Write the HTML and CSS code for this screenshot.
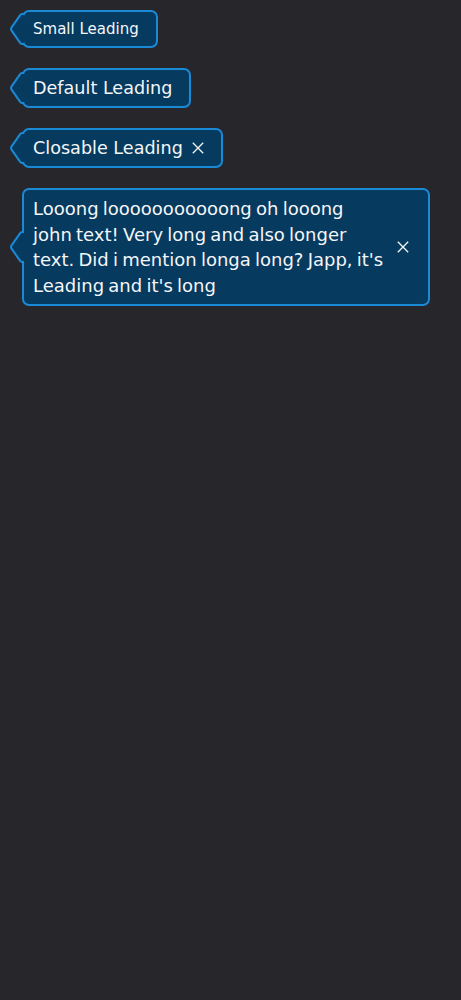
FILE: index.html
```html
<!DOCTYPE html>
<html>
<head>
<meta charset="utf-8">
<link rel="stylesheet" href="styles.css">
</head>
<body>
<div class="stack">
  <div class="tip tip-small">
    <svg class="arrow" viewBox="0 0 14 32" width="14" height="32"><path d="M14 1 L12 1 C11 1 10.5 1.6 9.8 2.6 L1.4 14.6 Q0.6 16 1.4 17.4 L9.8 29.4 C10.5 30.4 11 31 12 31 L14 31" /></svg>
    <span class="text">Small Leading</span>
  </div>
  <div class="tip">
    <svg class="arrow" viewBox="0 0 14 32" width="14" height="32"><path d="M14 1 L12 1 C11 1 10.5 1.6 9.8 2.6 L1.4 14.6 Q0.6 16 1.4 17.4 L9.8 29.4 C10.5 30.4 11 31 12 31 L14 31" /></svg>
    <span class="text">Default Leading</span>
  </div>
  <div class="tip">
    <svg class="arrow" viewBox="0 0 14 32" width="14" height="32"><path d="M14 1 L12 1 C11 1 10.5 1.6 9.8 2.6 L1.4 14.6 Q0.6 16 1.4 17.4 L9.8 29.4 C10.5 30.4 11 31 12 31 L14 31" /></svg>
    <span class="text">Closable Leading</span>
    <button class="close" aria-label="close"><svg viewBox="0 0 12 12" width="12" height="12"><path d="M0.8 0.8 L11.2 11.2 M11.2 0.8 L0.8 11.2"/></svg></button>
  </div>
  <div class="tip tip-long">
    <svg class="arrow" viewBox="0 0 14 32" width="14" height="32"><path d="M14 1 L12 1 C11 1 10.5 1.6 9.8 2.6 L1.4 14.6 Q0.6 16 1.4 17.4 L9.8 29.4 C10.5 30.4 11 31 12 31 L14 31" /></svg>
    <span class="text">Looong looooooooooong oh looong john text! Very long and also longer text. Did i mention longa long? Japp, it's Leading and it's long</span>
    <button class="close" aria-label="close"><svg viewBox="0 0 12 12" width="12" height="12"><path d="M0.8 0.8 L11.2 11.2 M11.2 0.8 L0.8 11.2"/></svg></button>
  </div>
</div>
</body>
</html>
```
FILE: styles.css
```css
html, body {
  margin: 0;
  padding: 0;
  background: #27262b;
  height: 100%;
}
body {
  font-family: "DejaVu Sans", sans-serif;
  color: #f4f6f8;
}
.stack {
  display: flex;
  flex-direction: column;
  align-items: flex-start;
  gap: 20px;
  padding: 10px 0 0 22px;
}
.tip {
  position: relative;
  display: flex;
  align-items: center;
  gap: 9px;
  box-sizing: border-box;
  background: #063a5f;
  border: 2px solid #1a8ad6;
  border-radius: 7px;
  padding: 5px 17px 5px 9px;
  font-size: 17.6px;
  line-height: 26px;
}
.tip-small {
  font-size: 15px;
  line-height: 22px;
  padding: 6px 17px 6px 9px;
}
.tip-long {
  width: 408px;
  gap: 12px;
  font-size: 18px;
  line-height: 25.5px;
  word-spacing: -1.5px;
  padding: 6px 19px 6px 9px;
}
.arrow {
  position: absolute;
  left: -14px;
  top: 50%;
  margin-top: -16px;
  overflow: visible;
}
.arrow path {
  fill: #063a5f;
  stroke: #1a8ad6;
  stroke-width: 2;
  stroke-linejoin: round;
}
.text {
  display: block;
}
.tip-long .text {
  flex: none;
  width: 352px;
}
.close {
  flex: none;
  background: none;
  border: 0;
  padding: 0;
  margin: 0;
  width: 12px;
  height: 12px;
  display: flex;
  cursor: pointer;
}
.close path {
  stroke: #f4f6f8;
  stroke-width: 1.3;
  fill: none;
}
```
